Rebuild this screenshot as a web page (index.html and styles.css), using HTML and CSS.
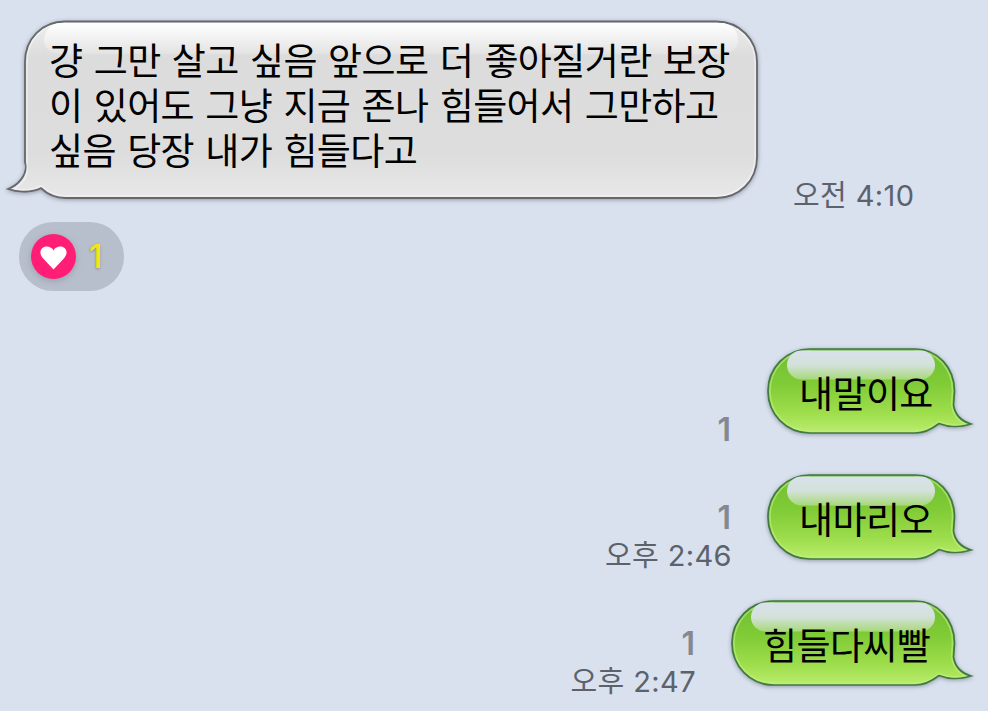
FILE: index.html
```
<!DOCTYPE html>
<html lang="ko">
<head>
    <meta charset="UTF-8">
    <meta name="viewport" content="width=device-width, initial-scale=1.0">
    <title>채팅</title>
    <link rel="stylesheet" href="styles.css">
</head>
<body>
    <!-- shared gradients -->
    <svg class="defs" width="0" height="0">
        <defs>
            <linearGradient id="grayFill" x1="0" y1="0" x2="0" y2="1">
                <stop offset="0" stop-color="#eeeeee"/>
                <stop offset="0.2" stop-color="#dcdcdc"/>
                <stop offset="0.75" stop-color="#dddddd"/>
                <stop offset="1" stop-color="#e8e8e8"/>
            </linearGradient>
            <linearGradient id="grayGloss" x1="0" y1="0" x2="0" y2="1">
                <stop offset="0" stop-color="#ffffff"/>
                <stop offset="1" stop-color="#e3e3e3"/>
            </linearGradient>
            <linearGradient id="greenFill" x1="0" y1="0" x2="0" y2="1">
                <stop offset="0" stop-color="#70bd36"/>
                <stop offset="0.4" stop-color="#7fcb35"/>
                <stop offset="0.75" stop-color="#9ddd4b"/>
                <stop offset="1" stop-color="#bbed6d"/>
            </linearGradient>
            <linearGradient id="greenGloss" x1="0" y1="0" x2="0" y2="1">
                <stop offset="0" stop-color="#d9e1ec"/>
                <stop offset="0.5" stop-color="#d3e1da"/>
                <stop offset="1" stop-color="#a8d97a"/>
            </linearGradient>
        </defs>
    </svg>

    <div class="chat">
        <div class="message received">
            <div class="bubble gray">
                <svg class="shape" width="764" height="190" viewBox="0 0 764 190">
                    <path fill="url(#grayFill)" stroke="#66686a" stroke-width="1.8" d="M65 6.5H716C740 6.5 757 25 757 47V142C757 166 739 183 716 183H66C55 183 47 179 41 173C34 177 19 178 8 174C19 170 26 160 26 151L25 147V47C25 24 42 6.5 65 6.5Z"/>
                    <path fill="none" stroke="#f6f6f6" stroke-width="1.5" opacity="0.6" d="M716 8.5C739 8.5 755 26 755 47V142C755 165 738 181 716 181H66C56 181 48 177 41 171C34 175 23 176 14 173.5C24 169 28 160 27 149V47C27 25 43 8.5 65 8.5"/>
                    <path fill="url(#grayGloss)" d="M60 8H722Q738 10 738 26Q736 39 720 39H62Q44 39 44 24Q46 10 60 8Z"/>
                </svg>
                <p>걍 그만 살고 싶음 앞으로 더 좋아질거란 보장<br>이 있어도 그냥 지금 존나 힘들어서 그만하고<br>싶음 당장 내가 힘들다고</p>
            </div>
            <div class="meta"><span class="time">오전 4:10</span></div>
        </div>

        <div class="reaction">
            <svg width="46" height="46" viewBox="0 0 46 46">
                <circle cx="22.5" cy="22.5" r="22.5" fill="#ff1d76"/>
                <path fill="#fff" d="M22.5 35.5L11.7 23.9C6.9 18.2 10.5 12.6 15.6 12.6C19 12.6 21.5 14.3 22.5 16.5C23.5 14.3 26 12.6 29.4 12.6C34.5 12.6 38.1 18.2 33.3 23.9Z"/>
            </svg>
            <span>1</span>
        </div>

        <div class="message sent">
            <div class="meta"><span class="unread">1</span></div>
            <div class="bubble green">
                <svg class="shape" width="208" height="88" viewBox="0 0 208 88">
                    <path fill="url(#greenFill)" stroke="#3f7a42" stroke-width="1.7" d="M43 2H148C171 2 187.5 21 187.5 44L186.5 58C188 68 194 74 204 77C194 80 182 80.5 172 76.5C165 82 158 86 148 86H43C19 86 1 67 1 44C1 21 19 2 43 2Z"/>
                    <path fill="none" stroke="#c4ee84" stroke-width="1.5" opacity="0.6" d="M148 4C170 4 185.5 22 185.5 44L184.5 58C186 68 191 74 198 77C190 79 181 78 172 74.5C164 80 158 84 148 84H43C20 84 3 66 3 44C3 22 20 4 43 4"/>
                    <rect x="20" y="3.5" width="148" height="29" rx="14.5" fill="url(#greenGloss)"/>
                </svg>
                <p>내말이요</p>
            </div>
        </div>

        <div class="message sent">
            <div class="meta"><span class="unread">1</span><span class="time">오후 2:46</span></div>
            <div class="bubble green">
                <svg class="shape" width="208" height="88" viewBox="0 0 208 88">
                    <path fill="url(#greenFill)" stroke="#3f7a42" stroke-width="1.7" d="M43 2H148C171 2 187.5 21 187.5 44L186.5 58C188 68 194 74 204 77C194 80 182 80.5 172 76.5C165 82 158 86 148 86H43C19 86 1 67 1 44C1 21 19 2 43 2Z"/>
                    <path fill="none" stroke="#c4ee84" stroke-width="1.5" opacity="0.6" d="M148 4C170 4 185.5 22 185.5 44L184.5 58C186 68 191 74 198 77C190 79 181 78 172 74.5C164 80 158 84 148 84H43C20 84 3 66 3 44C3 22 20 4 43 4"/>
                    <rect x="20" y="3.5" width="148" height="29" rx="14.5" fill="url(#greenGloss)"/>
                </svg>
                <p>내마리오</p>
            </div>
        </div>

        <div class="message sent">
            <div class="meta"><span class="unread">1</span><span class="time">오후 2:47</span></div>
            <div class="bubble green wide">
                <svg class="shape" width="244" height="88" viewBox="0 0 244 88">
                    <path fill="url(#greenFill)" stroke="#3f7a42" stroke-width="1.7" d="M43 2H184C207 2 223.5 21 223.5 44L222.5 58C224 68 230 74 240 77C230 80 218 80.5 208 76.5C201 82 194 86 184 86H43C19 86 1 67 1 44C1 21 19 2 43 2Z"/>
                    <path fill="none" stroke="#c4ee84" stroke-width="1.5" opacity="0.6" d="M184 4C206 4 221.5 22 221.5 44L220.5 58C222 68 227 74 234 77C226 79 217 78 208 74.5C200 80 194 84 184 84H43C20 84 3 66 3 44C3 22 20 4 43 4"/>
                    <rect x="20" y="3.5" width="184" height="29" rx="14.5" fill="url(#greenGloss)"/>
                </svg>
                <p>힘들다씨빨</p>
            </div>
        </div>
    </div>
</body>
</html>
```
FILE: styles.css
```
body {
    margin: 0;
    height: 711px;
    overflow: hidden;
    background: #d9e0ee;
    font-family: Inter, "Noto Sans CJK KR", sans-serif;
}

.defs {
    display: block;
}

.chat {
    padding-top: 15px;
}

.message {
    display: flex;
}

/* bubbles */
.bubble {
    position: relative;
    box-sizing: border-box;
    flex: none;
}

/* bubble outline sits behind the text */
.shape {
    position: absolute;
    top: 0;
    left: 0;
    overflow: visible;
    filter: drop-shadow(0 1px 2px rgba(60, 65, 80, 0.45));
}

.bubble p {
    position: relative;
    margin: 0;
    font-family: "Noto Sans CJK KR", sans-serif;
    font-size: 37px;
    line-height: 45px;
    letter-spacing: -0.6px;
    word-spacing: 1.5px;
    color: #000;
    white-space: nowrap;
}

.gray {
    width: 764px;
    height: 190px;
    padding: 22px 0 0 49px;
}

.green {
    width: 208px;
    height: 88px;
    padding: 23px 0 0 32px;
}

.wide {
    width: 244px;
}

/* time and unread count */
.meta {
    display: flex;
    flex-direction: column;
    justify-content: flex-end;
}

.time {
    font-size: 29px;
    line-height: 38px;
    letter-spacing: 0.4px;
    color: #5c626c;
}

.unread {
    padding-right: 1px;
    font-size: 32px;
    font-weight: 600;
    line-height: 38px;
    color: #85888e;
}

.received .meta {
    margin-left: 29px;
    transform: translateY(10px);
}

.reaction {
    display: flex;
    align-items: center;
    gap: 12px;
    box-sizing: border-box;
    width: 105px;
    height: 69px;
    margin: 17px 0 56px 19px;
    padding-left: 12px;
    border-radius: 34px;
    background: #b8bfcc;
}

.reaction svg {
    filter: drop-shadow(0 2px 3px rgba(60, 65, 80, 0.25));
}

.reaction span {
    font-size: 32px;
    font-weight: 500;
    color: #f6e41b;
    text-shadow: 0 1px 3px rgba(60, 65, 80, 0.4);
}

.sent {
    justify-content: flex-end;
    height: 88px;
    margin: 0 13px 38px 0;
}

.sent .meta {
    align-items: flex-end;
    margin-right: 35px;
    transform: translateY(14px);
}
```
